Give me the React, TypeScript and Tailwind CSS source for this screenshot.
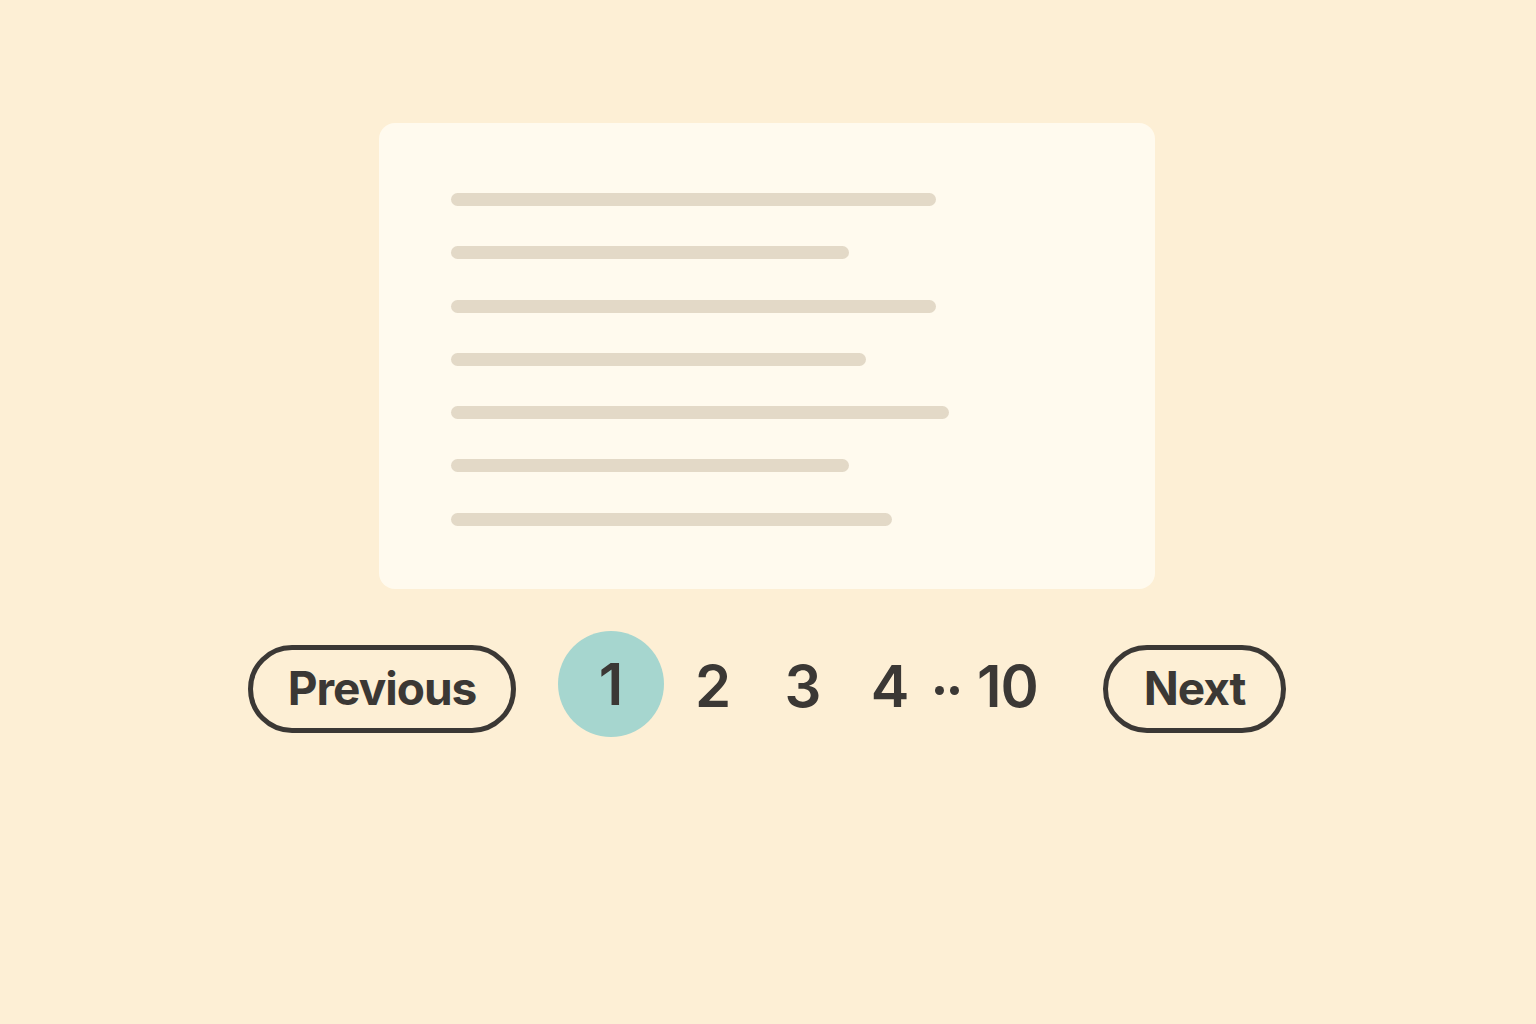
import React from "react";

const bars = [485, 398, 485, 415, 498, 398, 441];

function Dots() {
  return (
    <div className="flex items-center gap-[6px] ml-[15px] mt-[12px] w-[26px]">
      <span className="block w-[9px] h-[9px] rounded-full bg-[#3b3835]" />
      <span className="block w-[9px] h-[9px] rounded-full bg-[#3b3835]" />
    </div>
  );
}

export default function App() {
  return (
    <div
      className="w-[1536px] h-[1024px] bg-[#fdefd5] flex flex-col items-center pt-[123px] text-[#3b3835]"
      style={{ fontFamily: "Inter, 'Noto Sans', sans-serif" }}
    >
      {/* content card with placeholder text lines */}
      <div className="w-[776px] h-[466px] -ml-[2px] rounded-[16px] bg-[#fffaee] pl-[72px] pt-[70px] flex flex-col gap-[40.3px]">
        {bars.map((w, i) => (
          <div key={i} className="h-[13px] rounded-full bg-[#e3d9c7]" style={{ width: w }} />
        ))}
      </div>

      {/* pagination */}
      <div className="mt-[42px] w-[1038px] -ml-[2px] flex items-center">
        <button className="w-[268px] h-[88px] mt-[10px] rounded-full border-[5px] border-[#3b3835] flex items-center justify-center text-[46px] font-bold tracking-[-1px] text-[#3b3835] leading-none pb-[2px]">
          Previous
        </button>
        <div className="ml-[42px] w-[106px] h-[106px] rounded-full bg-[#a6d6cf] flex items-center justify-center text-[58px] font-semibold leading-none">
          1
        </div>
        <div className="ml-[19px] w-[60px] text-center text-[58px] font-semibold leading-none mt-[4px]">2</div>
        <div className="ml-[30px] w-[60px] text-center text-[58px] font-semibold leading-none mt-[4px]">3</div>
        <div className="ml-[27px] w-[60px] text-center text-[58px] font-semibold leading-none mt-[4px]">4</div>
        <Dots />
        <div className="ml-[6px] w-[81px] text-center text-[58px] font-semibold leading-none mt-[4px] tracking-[-1px]">10</div>
        <button className="ml-[55px] w-[183px] h-[88px] mt-[10px] rounded-full border-[5px] border-[#3b3835] flex items-center justify-center text-[46px] font-bold tracking-[-1px] text-[#3b3835] leading-none pb-[2px]">
          Next
        </button>
      </div>
    </div>
  );
}
